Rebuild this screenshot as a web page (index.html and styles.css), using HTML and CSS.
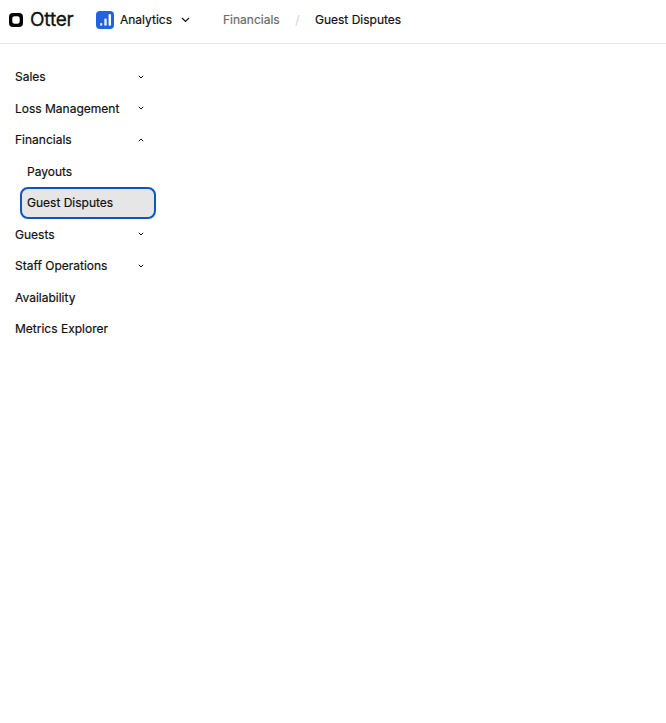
FILE: index.html
```html
<!DOCTYPE html>
<html lang="en">
<head>
    <meta charset="UTF-8">
    <title>Guest Disputes</title>
    <link rel="stylesheet" href="styles.css">
</head>
<body>
    <header class="topbar">
        <div class="brand">
            <svg class="brand-mark" width="14" height="14" viewBox="0 0 14 14"><path fill-rule="evenodd" d="M4 0h6c2.700 0 4 1.300 4 4v6c0 2.700-1.300 4-4 4H4c-2.700 0-4-1.300-4-4V4c0-2.700 1.300-4 4-4zM5.700 3.300C4.100 3.300 3.300 4.100 3.300 5.700v2.600c0 1.600.8 2.400 2.400 2.400h2.600c1.600 0 2.400-.8 2.400-2.400V5.700c0-1.600-.8-2.400-2.400-2.400z"/></svg>
            <span class="brand-name">Otter</span>
        </div>
        <div class="app-switch">
            <svg class="app-icon" width="18" height="18" viewBox="0 0 18 18"><rect width="18" height="18" rx="4" fill="#1f63e0"/><rect x="4" y="12" width="2.400" height="2.800" rx="1" fill="#fff" opacity=".8"/><rect x="8.300" y="7.500" width="2.400" height="7.300" rx="1" fill="#fff" opacity=".9"/><rect x="12.600" y="3" width="2.400" height="11.800" rx="1" fill="#fff"/></svg>
            <span class="app-name">Analytics</span>
            <svg class="chev-lg" width="9" height="6" viewBox="0 0 9 6"><path d="M1 1l3.500 3.500L8 1" fill="none" stroke="#111" stroke-width="1.200"/></svg>
        </div>
        <nav class="crumbs">
            <span class="crumb-link">Financials</span>
            <span class="crumb-sep">/</span>
            <span class="crumb-current">Guest Disputes</span>
        </nav>
    </header>

    <aside class="sidenav">
        <div class="nav-item"><span>Sales</span><svg width="6" height="4" viewBox="0 0 6 4"><path d="M.8.8L3 3 5.200.8" fill="none" stroke="#111" stroke-width="1"/></svg></div>
        <div class="nav-item"><span>Loss Management</span><svg width="6" height="4" viewBox="0 0 6 4"><path d="M.8.8L3 3 5.200.8" fill="none" stroke="#111" stroke-width="1"/></svg></div>
        <div class="nav-item"><span>Financials</span><svg width="6" height="4" viewBox="0 0 6 4"><path d="M.8 3.200L3 1l2.200 2.200" fill="none" stroke="#111" stroke-width="1"/></svg></div>
        <div class="nav-sub">Payouts</div>
        <div class="nav-sub selected">Guest Disputes</div>
        <div class="nav-item"><span>Guests</span><svg width="6" height="4" viewBox="0 0 6 4"><path d="M.8.8L3 3 5.200.8" fill="none" stroke="#111" stroke-width="1"/></svg></div>
        <div class="nav-item"><span>Staff Operations</span><svg width="6" height="4" viewBox="0 0 6 4"><path d="M.8.8L3 3 5.200.8" fill="none" stroke="#111" stroke-width="1"/></svg></div>
        <div class="nav-item"><span>Availability</span></div>
        <div class="nav-item"><span>Metrics Explorer</span></div>
    </aside>
</body>
</html>
```

FILE: styles.css
```css
body {
    font-family: 'Inter', 'Liberation Sans', sans-serif;
    margin: 0;
    padding: 0;
    background: #fff;
    color: #111;
    font-size: 12px;
    -webkit-text-stroke: 0.2px;
}

.topbar {
    display: flex;
    align-items: center;
    height: 39px;
    padding: 0 0 4px 9px;
    border-bottom: 1px solid #e8e8e8;
}

.brand {
    display: flex;
    align-items: center;
    gap: 7px;
    width: 87px;
}

.brand-mark {
    flex: none;
}

.brand-name {
    font-size: 19px;
    line-height: 20px;
    letter-spacing: -0.2px;
    -webkit-text-stroke: 0.3px;
}

.app-switch {
    display: flex;
    align-items: center;
    width: 127px;
}

.app-name {
    margin-left: 6px;
}

.chev-lg {
    margin-left: 9px;
}

.crumbs {
    display: flex;
    align-items: center;
}

.crumb-link {
    color: #6b6b6b;
}

.crumb-sep {
    color: #d8d8d8;
    margin: 0 15.500px;
}

.sidenav {
    display: flex;
    flex-direction: column;
    width: 136px;
    margin: 17px 0 0 20px;
}

.nav-item {
    display: flex;
    align-items: center;
    justify-content: space-between;
    height: 31.5px;
    margin-left: -5px;
    padding-right: 12px;
}

.nav-sub {
    display: flex;
    align-items: center;
    height: 31.5px;
    padding-left: 7px;
    box-sizing: border-box;
}

.selected {
    background: #e6e6e6;
    border: 2px solid #0b56c4;
    border-radius: 8px;
    padding-left: 5px;
}
```
